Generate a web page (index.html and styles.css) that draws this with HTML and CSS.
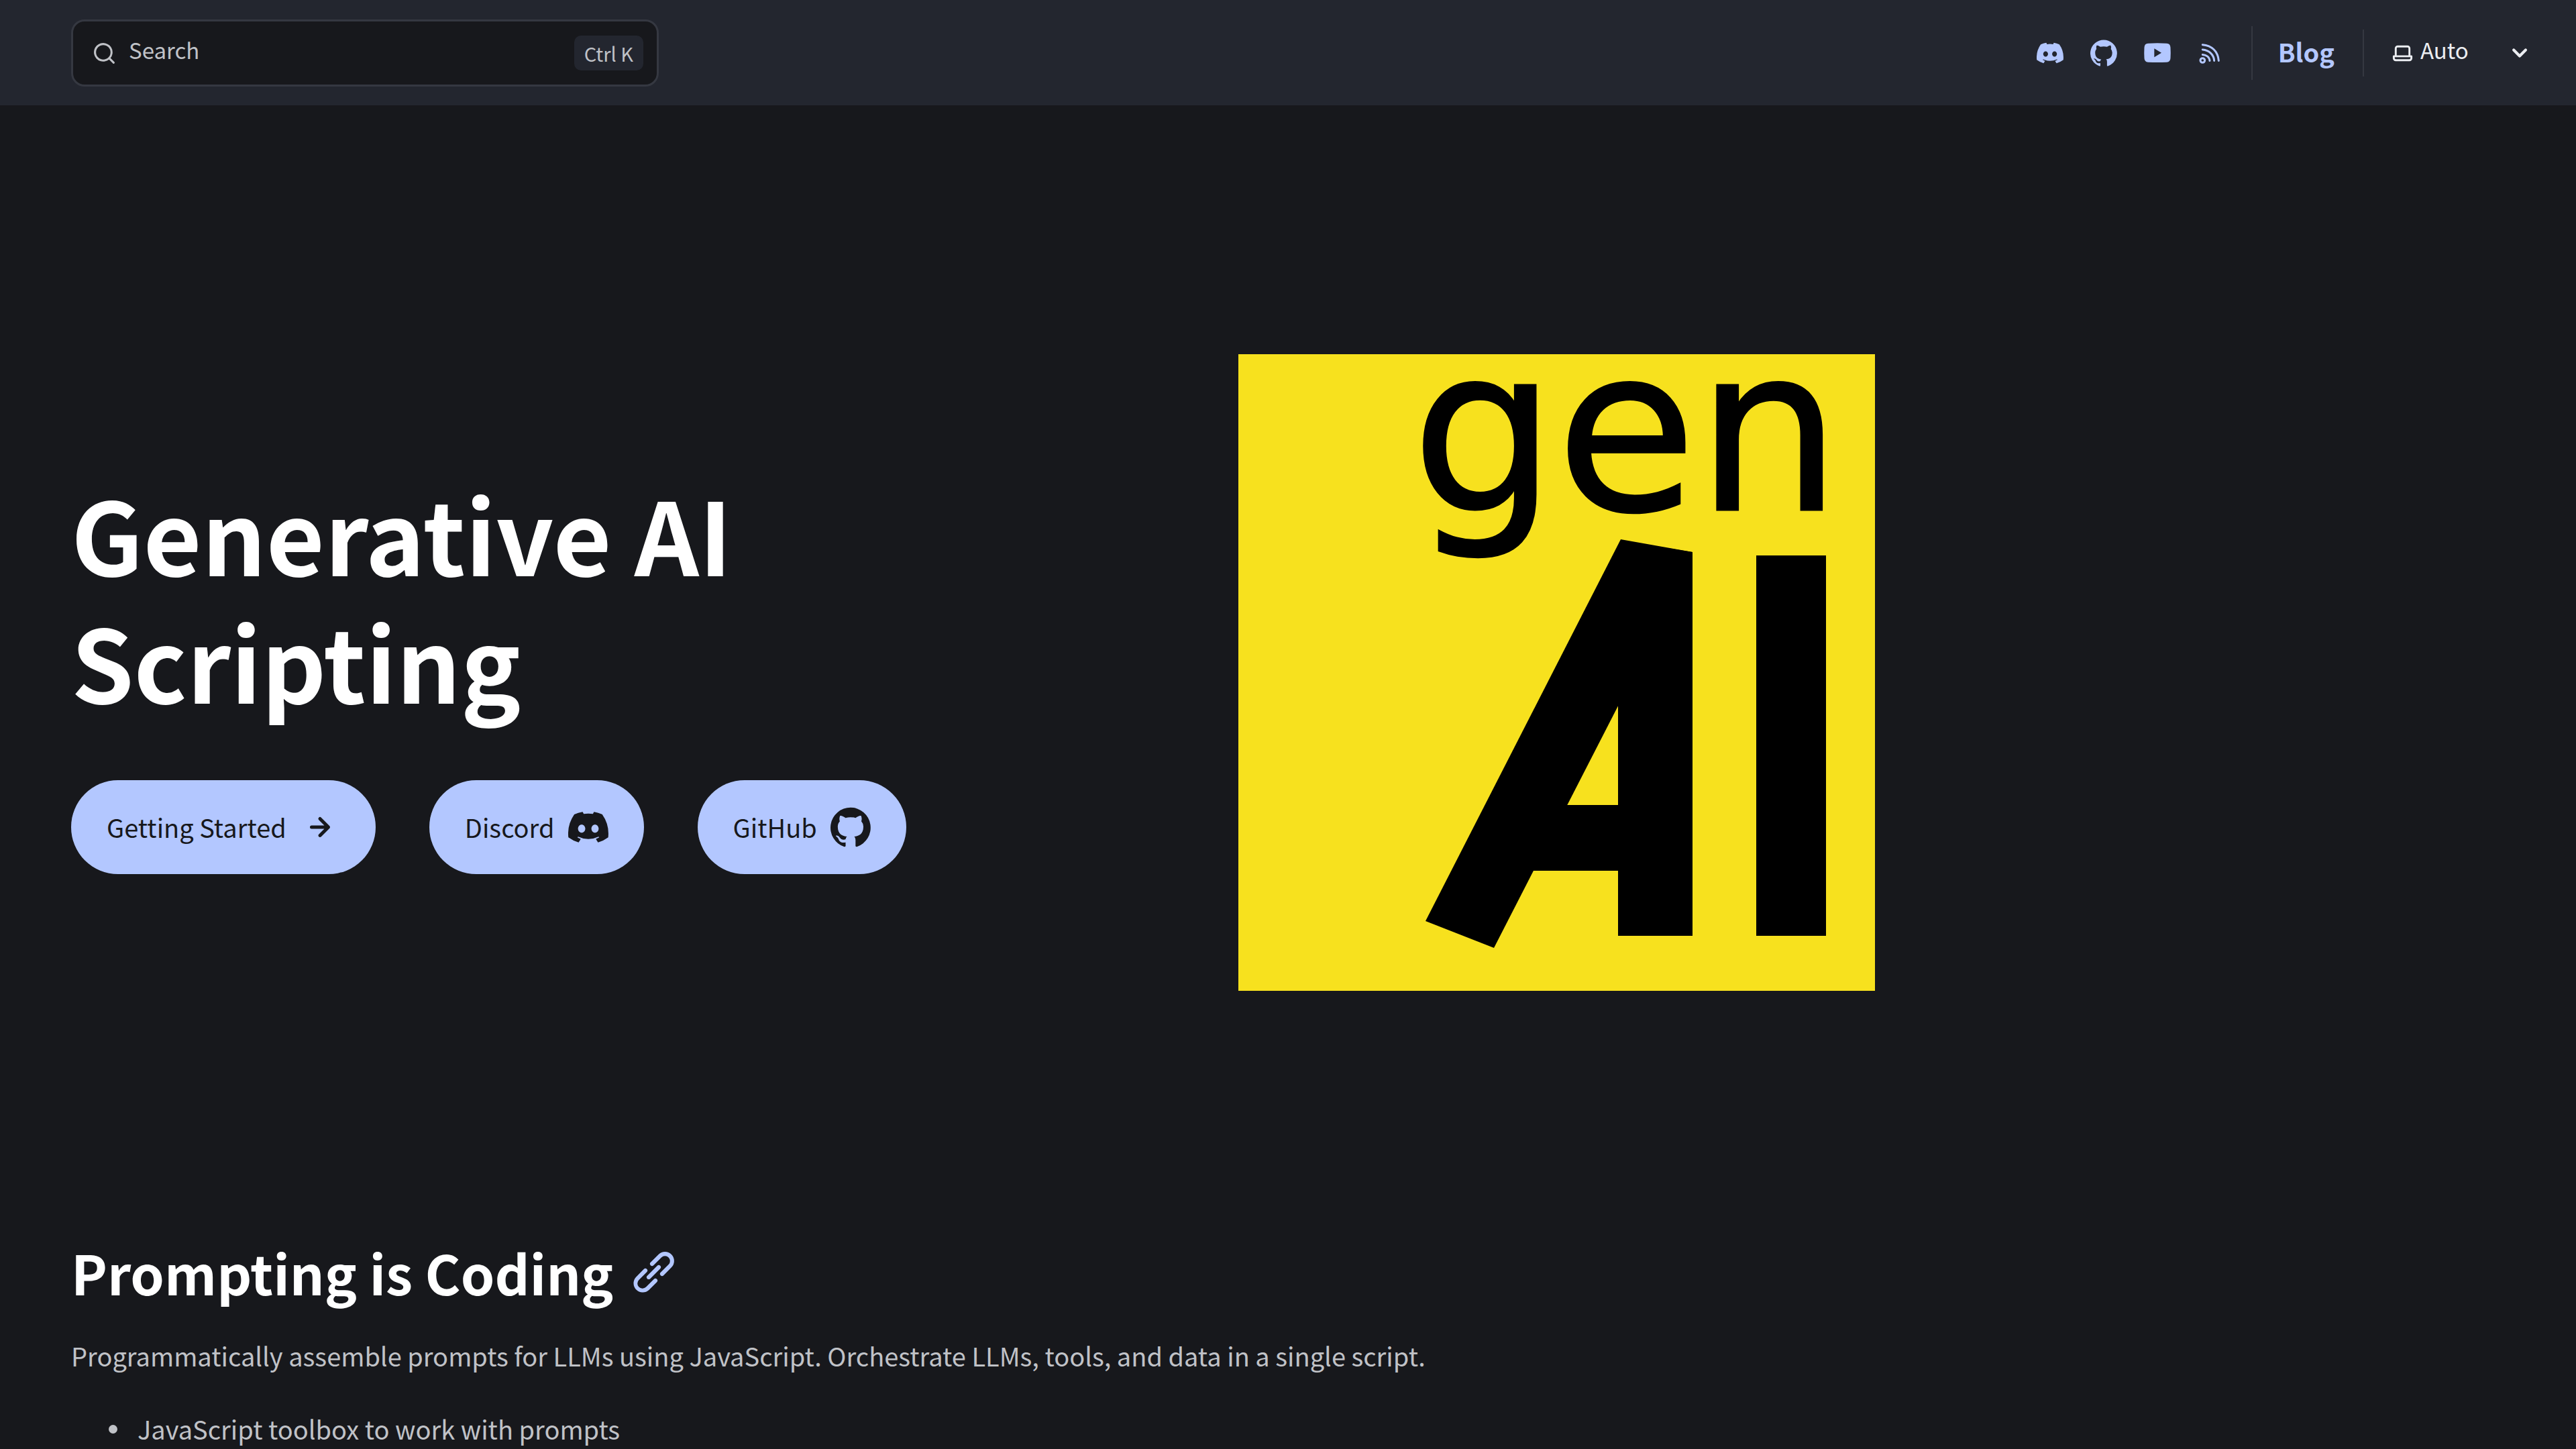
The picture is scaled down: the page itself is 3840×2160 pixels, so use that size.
FILE: index.html
```html
<!DOCTYPE html>
<html lang="en">
<head>
<meta charset="utf-8">
<meta name="viewport" content="width=device-width, initial-scale=1">
<title>Generative AI Scripting</title>
<link rel="stylesheet" href="styles.css">
</head>
<body>
<svg class="sprite" aria-hidden="true">
  <symbol id="i-discord" viewBox="0 0 24 24"><path d="M20.32 4.37a19.8 19.8 0 0 0-4.93-1.51 13.78 13.78 0 0 0-.64 1.28 18.27 18.27 0 0 0-5.5 0 12.64 12.64 0 0 0-.64-1.28h-.05A19.74 19.74 0 0 0 3.64 4.4 20.26 20.26 0 0 0 .11 18.09l.02.02a19.9 19.9 0 0 0 6.04 3.03l.04-.02a14.24 14.24 0 0 0 1.23-2.03.08.08 0 0 0-.05-.07 13.1 13.1 0 0 1-1.9-.92.08.08 0 0 1 .02-.1 10.2 10.2 0 0 0 .41-.31h.04a14.2 14.2 0 0 0 12.1 0l.04.01a9.63 9.63 0 0 0 .4.32.08.08 0 0 1-.03.1 12.29 12.29 0 0 1-1.9.91.08.08 0 0 0-.02.1 15.97 15.97 0 0 0 1.24 2.01h.04a19.84 19.84 0 0 0 6.03-3.05v-.03a20.12 20.12 0 0 0-3.57-13.69ZM8.02 15.33c-1.18 0-2.16-1.08-2.16-2.42 0-1.33.96-2.42 2.16-2.42 1.21 0 2.18 1.1 2.16 2.42 0 1.34-.96 2.42-2.16 2.42Zm7.97 0c-1.18 0-2.15-1.08-2.15-2.42 0-1.33.95-2.42 2.15-2.42 1.22 0 2.18 1.1 2.16 2.42 0 1.34-.94 2.42-2.16 2.42Z"/></symbol>
  <symbol id="i-github" viewBox="0 0 24 24"><path d="M12 .3a12 12 0 0 0-3.8 23.38c.6.12.83-.26.83-.57L9 21.07c-3.34.72-4.04-1.61-4.04-1.61-.55-1.39-1.34-1.76-1.34-1.76-1.08-.74.09-.73.09-.73 1.2.09 1.83 1.24 1.83 1.24 1.08 1.83 2.81 1.3 3.5 1 .1-.78.42-1.31.76-1.61-2.67-.3-5.47-1.33-5.47-5.93 0-1.31.47-2.38 1.24-3.22-.14-.3-.54-1.52.1-3.18 0 0 1-.32 3.3 1.23a11.5 11.5 0 0 1 6 0c2.28-1.55 3.29-1.23 3.29-1.23.64 1.66.24 2.88.12 3.18a4.65 4.65 0 0 1 1.23 3.22c0 4.61-2.8 5.63-5.48 5.92.42.36.81 1.1.81 2.22l-.01 3.29c0 .31.2.69.82.57A12 12 0 0 0 12 .3Z"/></symbol>
  <symbol id="i-youtube" viewBox="0 0 24 24"><path fill-rule="evenodd" d="M3.6 3.5Q12 2.9 20.4 3.5Q23.5 3.7 23.7 7Q24 11.8 23.7 16.6Q23.5 20 20.4 20.2Q12 20.7 3.6 20.2Q.5 20 .3 16.6Q0 11.8 .3 7Q.5 3.7 3.6 3.5ZM9.2 8v7.8l6.4-3.9Z"/></symbol>
  <symbol id="i-rss" viewBox="0 0 24 24"><g fill="none" stroke="currentColor" stroke-width="1.8" stroke-linecap="round"><circle cx="4.4" cy="18.6" r="2"/><path d="M4.4 4.6C12.6 5.2 18.2 10.6 18.8 18.9M4.4 9C10.2 9.5 14.4 13.4 14.8 18.9M4.4 13.5C8 13.8 10.5 15.8 10.8 18.9"/></g></symbol>
  <symbol id="i-search" viewBox="0 0 24 24"><path d="M21.71 20.29 18 16.61A9 9 0 1 0 16.61 18l3.68 3.68a1 1 0 0 0 1.42 0 1 1 0 0 0 0-1.39ZM11 18a7 7 0 1 1 0-14 7 7 0 0 1 0 14Z"/></symbol>
  <symbol id="i-laptop" viewBox="0 0 24 24"><path d="M21 14h-1V7a3 3 0 0 0-3-3H7a3 3 0 0 0-3 3v7H3a1 1 0 0 0-1 1v2a3 3 0 0 0 3 3h14a3 3 0 0 0 3-3v-2a1 1 0 0 0-1-1ZM6 7a1 1 0 0 1 1-1h10a1 1 0 0 1 1 1v7H6V7Zm14 10a1 1 0 0 1-1 1H5a1 1 0 0 1-1-1v-1h16v1Z"/></symbol>
  <symbol id="i-caret" viewBox="0 0 24 24"><path d="M17 9.17a1 1 0 0 0-1.41 0L12 12.71 8.46 9.17a1 1 0 1 0-1.41 1.42l4.24 4.24a1 1 0 0 0 1.42 0L17 10.59a1 1 0 0 0 0-1.42Z"/></symbol>
  <symbol id="i-arrow" viewBox="0 0 24 24"><path d="M17.92 11.62a1 1 0 0 0-.21-.33l-5-5a1 1 0 1 0-1.42 1.42l3.3 3.29H7a1 1 0 0 0 0 2h7.59l-3.3 3.29a1 1 0 0 0 .325 1.639 1 1 0 0 0 1.095-.219l5-5c.091-.095.162-.207.21-.33a1 1 0 0 0 0-.76Z"/></symbol>
  <symbol id="i-link" viewBox="0 0 24 24"><path d="m12.11 15.39-3.88 3.88a2.52 2.52 0 0 1-3.5 0 2.47 2.47 0 0 1 0-3.5l3.88-3.88a1 1 0 0 0-1.42-1.42l-3.88 3.89a4.48 4.48 0 0 0 6.33 6.33l3.89-3.88a1 1 0 1 0-1.42-1.42Zm8.58-12.08a4.49 4.49 0 0 0-6.33 0l-3.89 3.88a1 1 0 0 0 1.42 1.42l3.88-3.88a2.52 2.52 0 0 1 3.5 0 2.47 2.47 0 0 1 0 3.5l-3.88 3.88a1 1 0 1 0 1.42 1.42l3.88-3.89a4.49 4.49 0 0 0 0-6.33ZM8.83 15.17a1 1 0 0 0 1.1.22 1 1 0 0 0 .32-.22l4.92-4.92a1 1 0 0 0-1.42-1.42l-4.92 4.92a1 1 0 0 0 0 1.42Z"/></symbol>
</svg>

<header class="header">
  <button class="search" type="button">
    <svg class="icon icon-search" aria-hidden="true"><use href="#i-search"/></svg>
    <span class="search-label">Search</span>
    <kbd class="search-key">Ctrl K</kbd>
  </button>
  <div class="tools">
    <nav class="social" aria-label="Social links">
      <a href="#discord" aria-label="Discord"><svg class="icon"><use href="#i-discord"/></svg></a>
      <a href="#github" aria-label="GitHub"><svg class="icon"><use href="#i-github"/></svg></a>
      <a href="#youtube" aria-label="YouTube"><svg class="icon"><use href="#i-youtube"/></svg></a>
      <a href="#rss" aria-label="RSS"><svg class="icon"><use href="#i-rss"/></svg></a>
    </nav>
    <div class="blog"><a href="#blog">Blog</a></div>
    <label class="theme">
      <svg class="icon icon-laptop" aria-hidden="true"><use href="#i-laptop"/></svg>
      <select class="theme-select" aria-label="Select theme">
        <option>Auto</option>
        <option>Dark</option>
        <option>Light</option>
      </select>
      <svg class="icon icon-caret" aria-hidden="true"><use href="#i-caret"/></svg>
    </label>
  </div>
</header>

<main class="main">
  <section class="hero">
    <div class="hero-copy">
      <h1>Generative AI Scripting</h1>
      <div class="actions">
        <a class="action" href="#start">Getting Started <svg class="icon icon-action" aria-hidden="true"><use href="#i-arrow"/></svg></a>
        <a class="action" href="#discord">Discord <svg class="icon icon-action" aria-hidden="true"><use href="#i-discord"/></svg></a>
        <a class="action" href="#github">GitHub <svg class="icon icon-action" aria-hidden="true"><use href="#i-github"/></svg></a>
      </div>
    </div>
    <svg class="logo" viewBox="0 0 949 949" role="img" aria-label="genAI logo">
      <rect width="949" height="949" fill="#f7e11e"/>
      <text class="logo-text" x="258" y="232">gen</text>
      <!-- slanted bar, upright bar and cross bar -->
      <polygon points="570,276 677,295 677,308 381,885 279,845"/>
      <polygon points="566,290 640,289 677,295 677,867 566,867"/>
      <rect x="430" y="672" width="140" height="98"/>
      <rect x="772" y="300" width="104" height="567"/>
    </svg>
  </section>

  <section class="content">
    <div class="heading">
      <h2 id="prompting-is-coding">Prompting is Coding</h2>
      <a href="#prompting-is-coding" aria-label="Section titled Prompting is Coding"><svg class="icon icon-link"><use href="#i-link"/></svg></a>
    </div>
    <p>Programmatically assemble prompts for LLMs using JavaScript. Orchestrate LLMs, tools, and data in a single script.</p>
    <ul>
      <li>JavaScript toolbox to work with prompts</li>
    </ul>
  </section>
</main>
</body>
</html>
```
FILE: styles.css
```css
:root {
  --bg: #17181c;
  --bar: #23262f;
  --line: #353841;
  --text: #c0c2c7;
  --bright: #eceef2;
  --accent: #b3c7ff;
  --pad: 106px;
}

* { box-sizing: border-box; }

body {
  margin: 0;
  background: var(--bg);
  color: var(--text);
  font-family: "Noto Sans CJK SC", "Noto Sans", sans-serif;
  font-size: 38px;
  line-height: 60px;
}

h1, h2, p, ul { margin: 0; }
h1, h2 { color: #fff; font-weight: 700; }
a { color: var(--accent); text-decoration: none; }

.sprite { position: absolute; width: 0; height: 0; }
.icon { display: block; flex: none; width: 40px; height: 40px; fill: currentColor; }

.header {
  display: flex;
  align-items: center;
  justify-content: space-between;
  padding: 29px 59px 28px var(--pad);
  background: var(--bar);
}

.search {
  display: flex;
  align-items: center;
  width: 876px;
  height: 100px;
  padding: 0 20px 0 28px;
  border: 3px solid var(--line);
  border-radius: 20px;
  background: var(--bg);
  color: var(--text);
  font: inherit;
}
.icon-search { width: 37px; height: 37px; }
.search-label { flex: 1; padding: 0 0 10px 18px; text-align: left; font-size: 33px; line-height: 48px; }
.search-key {
  padding: 0 15px;
  border-radius: 10px;
  background: var(--bar);
  font-family: inherit;
  font-size: 29px;
  line-height: 52px;
}

.tools { display: flex; align-items: center; }
.social {
  display: flex;
  align-items: center;
  gap: 40px;
  height: 80px;
  padding-right: 40px;
  border-right: 2px solid var(--line);
}
.blog { padding: 3px 42px 7px 38px; border-right: 2px solid var(--line); font-weight: 700; }
.theme { display: flex; align-items: center; padding-left: 40px; color: var(--bright); }
.icon-laptop { width: 35px; height: 35px; }
.icon-caret { width: 50px; height: 50px; }
.theme-select {
  width: 132px;
  height: 60px;
  padding: 0 0 10px 9px;
  border: 0;
  background: none;
  color: inherit;
  font: inherit;
  font-size: 33px;
  line-height: 50px;
  appearance: none;
}
.theme-select option { background: var(--bar); }

.main { padding: 0 var(--pad); }

.hero {
  display: flex;
  align-items: center;
  justify-content: space-between;
  max-width: 2689px;
  padding: 371px 0 369px;
}
.hero-copy { display: grid; gap: 84px; max-width: 1300px; padding-bottom: 4px; }
h1 { font-size: 150px; line-height: 190px; }
.actions { display: flex; gap: 80px; }
.action {
  display: flex;
  align-items: center;
  gap: 20px;
  height: 140px;
  padding: 0 53px;
  border-radius: 70px;
  background: var(--accent);
  color: var(--bg);
  white-space: nowrap;
}
.icon-action { width: 60px; height: 60px; }

.logo { display: block; flex: none; width: 949px; }
.logo-text { font-family: "DejaVu Sans", sans-serif; font-size: 340px; stroke: #000; stroke-width: 3; }

.heading { display: flex; align-items: center; gap: 24px; margin-bottom: 45px; }
h2 { font-size: 81px; line-height: 100px; }
.icon-link { width: 73px; height: 73px; }
ul { margin-top: 49px; padding-left: 56px; list-style: none; }
li { display: flex; align-items: center; gap: 30px; }
li::before { content: ""; width: 13px; height: 13px; border-radius: 50%; background: currentColor; }
```
